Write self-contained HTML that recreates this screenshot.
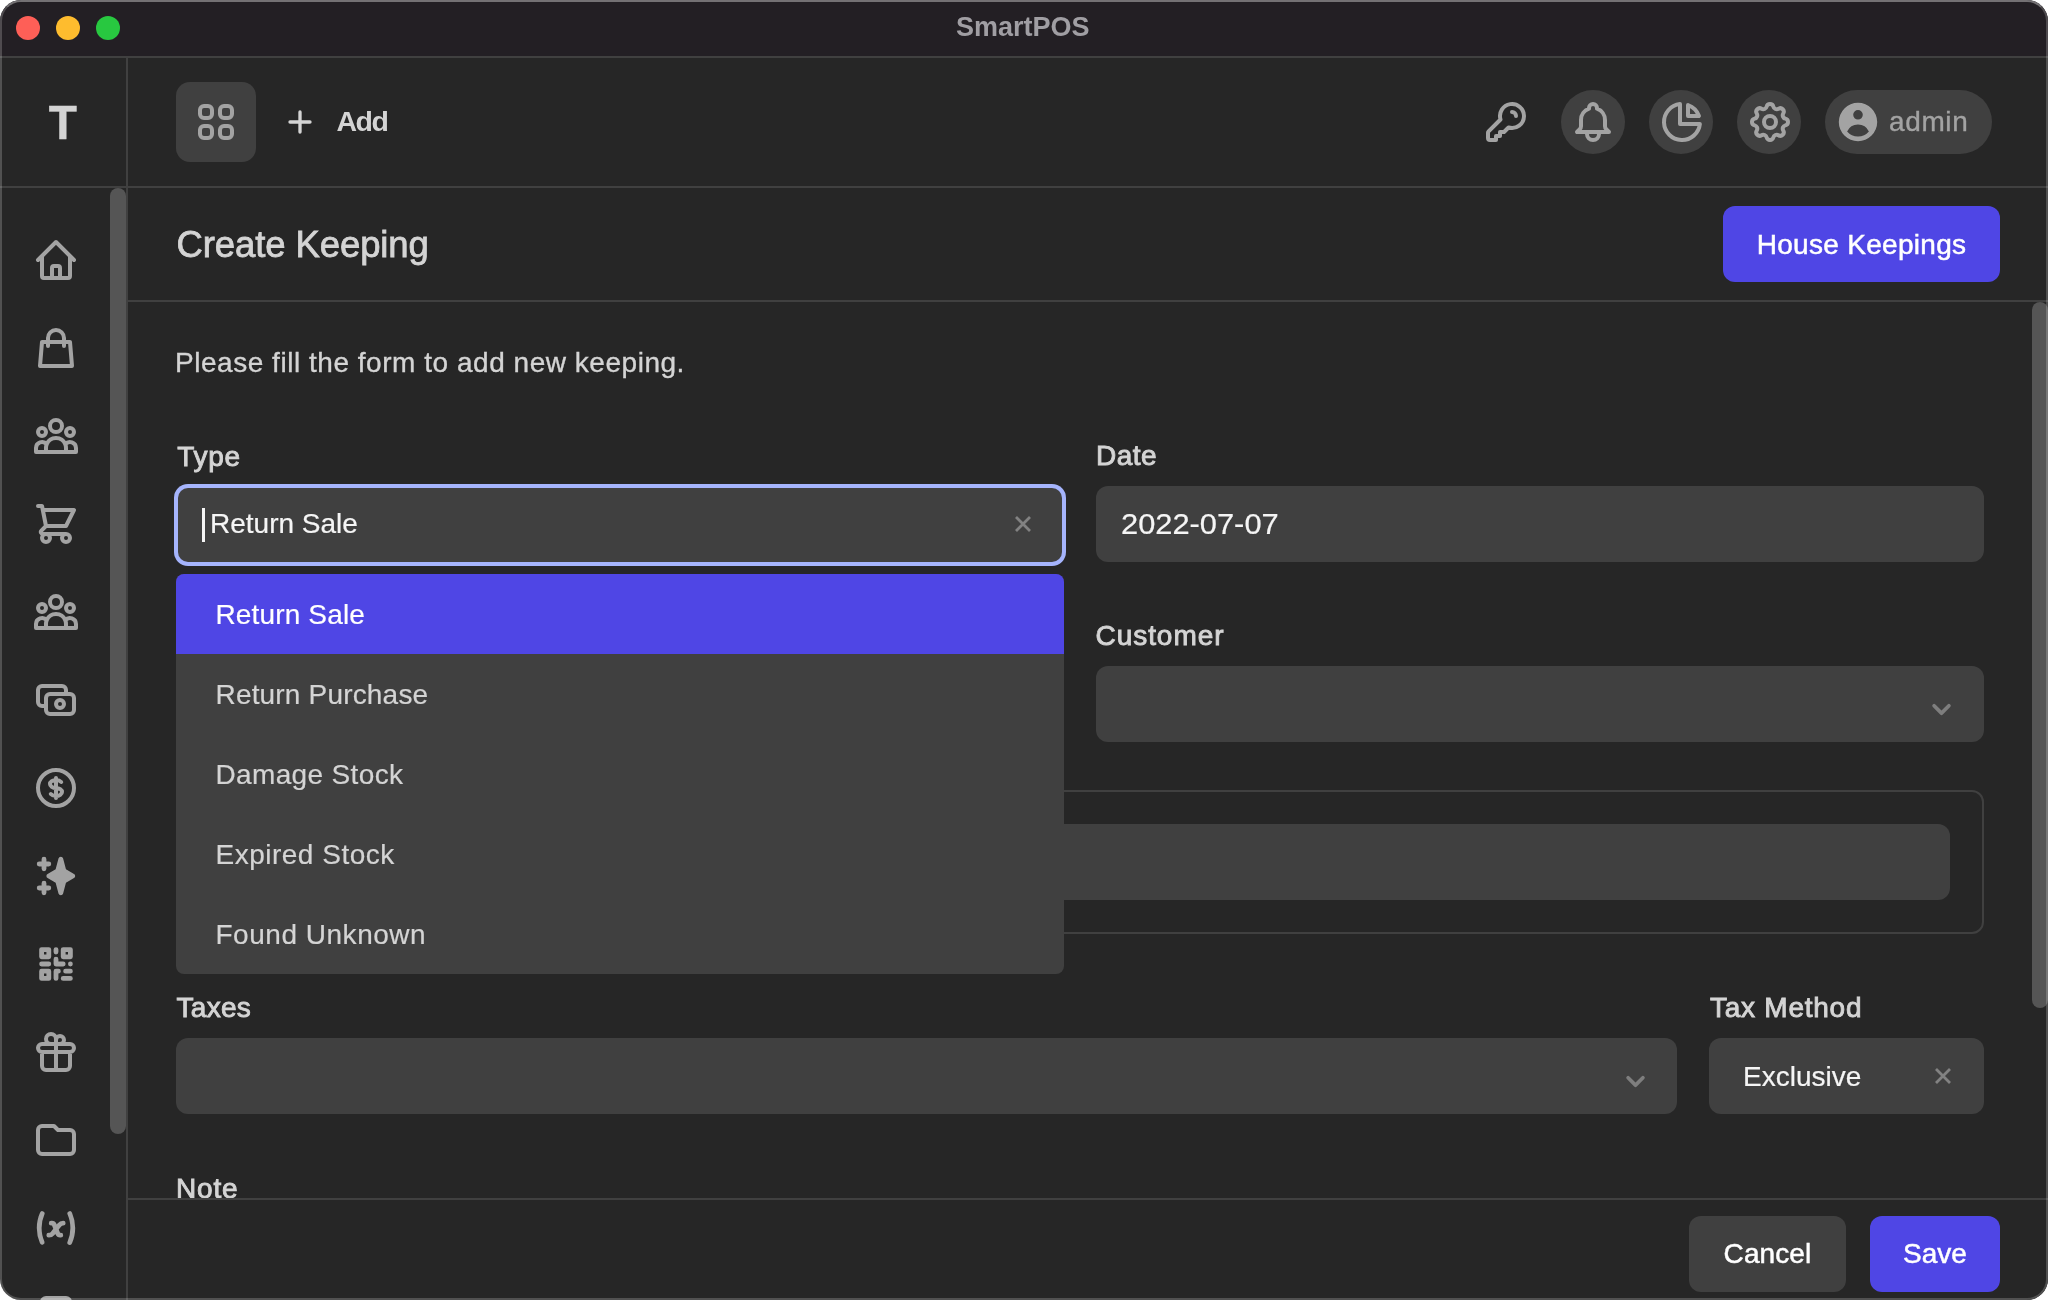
<!DOCTYPE html>
<html lang="en">
<head>
<meta charset="utf-8">
<title>SmartPOS</title>
<style>
*{box-sizing:border-box;margin:0;padding:0}
html,body{width:2048px;height:1300px;overflow:hidden;background:#fff;font-family:"Liberation Sans",sans-serif;color:#d4d4d4}
.abs{position:absolute}
.m{-webkit-text-stroke:0.6px currentColor}
#win{position:absolute;left:0;top:0;width:2048px;height:1300px;border-radius:21px;overflow:hidden;background:#262626;will-change:transform}
#frame{position:absolute;left:0;top:0;width:2048px;height:1300px;border-radius:21px;border:2px solid rgba(255,255,255,.2);border-top-color:rgba(255,255,255,.37);z-index:50;pointer-events:none}
#titlebar{left:0;top:0;width:2048px;height:56px;background:#231f24}
.tl{position:absolute;top:16px;width:24px;height:24px;border-radius:50%}
#title{left:956px;top:0;height:56px;line-height:55px;white-space:nowrap;font-weight:bold;font-size:27px;color:#a09ea3;letter-spacing:0}
.hl{position:absolute;background:#404040}
svg.i{position:absolute;width:48px;height:48px;fill:none;stroke:#a3a3a3;stroke-width:2;stroke-linecap:round;stroke-linejoin:round}
svg.s{position:absolute;width:48px;height:48px;fill:#a3a3a3;stroke:none}
.circ{position:absolute;width:64px;height:64px;border-radius:32px;background:#404040;top:90px}
.field{position:absolute;background:#404040;border-radius:12px;height:76px}
.lbl{position:absolute;font-size:28px;line-height:36px;color:#d4d4d4;white-space:nowrap;-webkit-text-stroke:0.9px #d4d4d4}
.txt{position:absolute;font-size:28px;line-height:36px;white-space:nowrap}
.opt{position:absolute;left:0;width:888px;height:80px;line-height:81px;padding-left:39.5px;font-size:28px;color:#d4d4d4;white-space:nowrap;-webkit-text-stroke:0.2px currentColor}
.btn{position:absolute;height:76px;line-height:76px;border-radius:12px;text-align:center;font-size:28px;white-space:nowrap}
</style>
</head>
<body>
<div id="win">
  <!-- title bar -->
  <div id="titlebar" class="abs"></div>
  <div class="tl" style="left:16px;background:#fe5f57"></div>
  <div class="tl" style="left:56px;background:#febc2e"></div>
  <div class="tl" style="left:96px;background:#28c840"></div>
  <div id="title" class="abs">SmartPOS</div>
  <div class="hl" style="left:0;top:56px;width:2048px;height:2px"></div>

  <!-- sidebar -->
  <div class="hl" style="left:126px;top:58px;width:2px;height:1242px"></div>
  <div class="hl" style="left:0;top:186px;width:2048px;height:2px"></div>
  <div class="abs" style="left:0;top:94.3px;width:125.5px;text-align:center;font-size:48.5px;line-height:56px;font-weight:bold;color:#d4d4d4;-webkit-text-stroke:.45px #d4d4d4;transform:scaleX(.95)">T</div>
  <div class="abs" style="left:110px;top:188px;width:16px;height:946px;border-radius:8px;background:#555"></div>

  <svg class="i" style="left:32px;top:236px" viewBox="0 0 24 24"><path d="M3 12l2-2m0 0l7-7 7 7M5 10v10a1 1 0 001 1h3m10-11l2 2m-2-2v10a1 1 0 01-1 1h-3m-6 0a1 1 0 001-1v-4a1 1 0 011-1h2a1 1 0 011 1v4a1 1 0 001 1m-6 0h6"/></svg>
  <svg class="i" style="left:32px;top:324px" viewBox="0 0 24 24"><path d="M16 11V7a4 4 0 00-8 0v4M5 9h14l1 12H4L5 9z"/></svg>
  <svg class="i" style="left:32px;top:412px" viewBox="0 0 24 24"><path d="M17 20h5v-2a3 3 0 00-5.356-1.857M17 20H7m10 0v-2c0-.656-.126-1.283-.356-1.857M7 20H2v-2a3 3 0 015.356-1.857M7 20v-2c0-.656.126-1.283.356-1.857m0 0a5.002 5.002 0 019.288 0M15 7a3 3 0 11-6 0 3 3 0 016 0zm6 3a2 2 0 11-4 0 2 2 0 014 0zM7 10a2 2 0 11-4 0 2 2 0 014 0z"/></svg>
  <svg class="i" style="left:32px;top:500px" viewBox="0 0 24 24"><path d="M3 3h2l.4 2M7 13h10l4-8H5.4M7 13L5.4 5M7 13l-2.293 2.293c-.63.63-.184 1.707.707 1.707H17m0 0a2 2 0 100 4 2 2 0 000-4zm-8 2a2 2 0 11-4 0 2 2 0 014 0z"/></svg>
  <svg class="i" style="left:32px;top:588px" viewBox="0 0 24 24"><path d="M17 20h5v-2a3 3 0 00-5.356-1.857M17 20H7m10 0v-2c0-.656-.126-1.283-.356-1.857M7 20H2v-2a3 3 0 015.356-1.857M7 20v-2c0-.656.126-1.283.356-1.857m0 0a5.002 5.002 0 019.288 0M15 7a3 3 0 11-6 0 3 3 0 016 0zm6 3a2 2 0 11-4 0 2 2 0 014 0zM7 10a2 2 0 11-4 0 2 2 0 014 0z"/></svg>
  <svg class="i" style="left:32px;top:676px" viewBox="0 0 24 24"><path d="M17 9V7a2 2 0 00-2-2H5a2 2 0 00-2 2v6a2 2 0 002 2h2m2 4h10a2 2 0 002-2v-6a2 2 0 00-2-2H9a2 2 0 00-2 2v6a2 2 0 002 2zm7-5a2 2 0 11-4 0 2 2 0 014 0z"/></svg>
  <svg class="i" style="left:32px;top:764px" viewBox="0 0 24 24"><path d="M12 8c-1.657 0-3 .895-3 2s1.343 2 3 2 3 .895 3 2-1.343 2-3 2m0-8c1.11 0 2.08.402 2.599 1M12 8V7m0 1v8m0 0v1m0-1c-1.11 0-2.08-.402-2.599-1M21 12a9 9 0 11-18 0 9 9 0 0118 0z"/></svg>
  <svg class="s" style="left:32px;top:852px" viewBox="0 0 20 20"><path fill-rule="evenodd" clip-rule="evenodd" d="M5 2a1 1 0 011 1v1h1a1 1 0 010 2H6v1a1 1 0 01-2 0V6H3a1 1 0 010-2h1V3a1 1 0 011-1zm0 10a1 1 0 011 1v1h1a1 1 0 110 2H6v1a1 1 0 11-2 0v-1H3a1 1 0 110-2h1v-1a1 1 0 011-1zM12 2a1 1 0 01.967.744L14.146 7.2 17.5 9.134a1 1 0 010 1.732l-3.354 1.935-1.18 4.455a1 1 0 01-1.933 0L9.854 12.8 6.5 10.866a1 1 0 010-1.732l3.354-1.935 1.18-4.455A1 1 0 0112 2z"/></svg>
  <svg class="s" style="left:32px;top:940px" viewBox="0 0 20 20"><path fill-rule="evenodd" clip-rule="evenodd" d="M3 4a1 1 0 011-1h3a1 1 0 011 1v3a1 1 0 01-1 1H4a1 1 0 01-1-1V4zm2 2V5h1v1H5zM3 13a1 1 0 011-1h3a1 1 0 011 1v3a1 1 0 01-1 1H4a1 1 0 01-1-1v-3zm2 2v-1h1v1H5zM13 3a1 1 0 00-1 1v3a1 1 0 001 1h3a1 1 0 001-1V4a1 1 0 00-1-1h-3zm1 2v1h1V5h-1z"/><path d="M11 4a1 1 0 10-2 0v1a1 1 0 002 0V4zM10 7a1 1 0 011 1v1h2a1 1 0 110 2h-3a1 1 0 01-1-1V8a1 1 0 011-1zM16 9a1 1 0 100 2 1 1 0 000-2zM9 13a1 1 0 011-1h1a1 1 0 110 2v2a1 1 0 11-2 0v-3zM7 11a1 1 0 100-2H4a1 1 0 100 2h3zM17 13a1 1 0 01-1 1h-2a1 1 0 110-2h2a1 1 0 011 1zM16 17a1 1 0 100-2h-3a1 1 0 100 2h3z"/></svg>
  <svg class="i" style="left:32px;top:1028px" viewBox="0 0 24 24"><path d="M12 8v13m0-13V6a2 2 0 112 2h-2zm0 0V5.500A2.500 2.500 0 109.500 8H12zm-7 4h14M5 12a2 2 0 110-4h14a2 2 0 110 4M5 12v7a2 2 0 002 2h10a2 2 0 002-2v-7"/></svg>
  <svg class="i" style="left:32px;top:1116px" viewBox="0 0 24 24"><path d="M3 7v10a2 2 0 002 2h14a2 2 0 002-2V9a2 2 0 00-2-2h-6l-2-2H5a2 2 0 00-2 2z"/></svg>
  <svg class="s" style="left:32px;top:1204px" viewBox="0 0 20 20"><path fill-rule="evenodd" clip-rule="evenodd" d="M4.649 3.084A1 1 0 015.163 4.400 13.950 13.950 0 004 10c0 1.993.416 3.886 1.164 5.600a1 1 0 01-1.832.800A15.950 15.950 0 012 10c0-2.274.475-4.440 1.332-6.400a1 1 0 011.317-.516zM12.960 7a3 3 0 00-2.342 1.126l-.328.410-.111-.279A2 2 0 008.323 7H8a1 1 0 000 2h.323l.532 1.330-1.035 1.295a1 1 0 01-.781.375H7a1 1 0 100 2h.039a3 3 0 002.342-1.126l.328-.410.111.279A2 2 0 0011.677 14H12a1 1 0 100-2h-.323l-.532-1.330 1.035-1.295A1 1 0 0112.961 9H13a1 1 0 100-2h-.039zm1.874-2.600a1 1 0 011.833-.800A15.950 15.950 0 0118 10c0 2.274-.475 4.440-1.332 6.400a1 1 0 11-1.832-.800A13.949 13.949 0 0016 10c0-1.993-.416-3.886-1.165-5.600z"/></svg>
  <svg class="i" style="left:32px;top:1292px" viewBox="0 0 24 24"><path d="M9 7h6m0 10v-3m-3 3h.01M9 17h.01M9 14h.01M12 14h.01M15 11h.01M12 11h.01M9 11h.01M7 21h10a2 2 0 002-2V5a2 2 0 00-2-2H7a2 2 0 00-2 2v14a2 2 0 002 2z"/></svg>

  <!-- header -->
  <div class="abs" style="left:176px;top:82px;width:80px;height:80px;border-radius:14px;background:#404040"></div>
  <div class="circ" style="left:1561px"></div>
  <div class="circ" style="left:1649px"></div>
  <div class="circ" style="left:1737px"></div>
  <div class="circ" style="left:1825px;width:167px"></div>
  <svg class="i" style="left:192px;top:98px" viewBox="0 0 24 24"><path d="M4 6a2 2 0 012-2h2a2 2 0 012 2v2a2 2 0 01-2 2H6a2 2 0 01-2-2V6zM14 6a2 2 0 012-2h2a2 2 0 012 2v2a2 2 0 01-2 2h-2a2 2 0 01-2-2V6zM4 16a2 2 0 012-2h2a2 2 0 012 2v2a2 2 0 01-2 2H6a2 2 0 01-2-2v-2zM14 16a2 2 0 012-2h2a2 2 0 012 2v2a2 2 0 01-2 2h-2a2 2 0 01-2-2v-2z"/></svg>
  <svg class="i" style="left:280px;top:102px;width:40px;height:40px;stroke:#d4d4d4" viewBox="0 0 24 24"><path d="M12 6v6m0 0v6m0-6h6m-6 0H6"/></svg>
  <svg class="i" style="left:1482px;top:98px" viewBox="0 0 24 24"><path d="M15 7a2 2 0 012 2m4 0a6 6 0 01-7.743 5.743L11 17H9v2H7v2H4a1 1 0 01-1-1v-2.586a1 1 0 01.293-.707l5.964-5.964A6 6 0 1121 9z"/></svg>
  <svg class="i" style="left:1569px;top:98px" viewBox="0 0 24 24"><path d="M15 17h5l-1.405-1.405A2.032 2.032 0 0118 14.158V11a6.002 6.002 0 00-4-5.659V5a2 2 0 10-4 0v.341C7.670 6.165 6 8.388 6 11v3.159c0 .538-.214 1.055-.595 1.436L4 17h5m6 0v1a3 3 0 11-6 0v-1m6 0H9"/></svg>
  <svg class="i" style="left:1658px;top:98px" viewBox="0 0 24 24"><path d="M11 3.055A9.001 9.001 0 1020.945 13H11V3.055z"/><path d="M20.488 9H15V3.512A9.025 9.025 0 0120.488 9z"/></svg>
  <svg class="i" style="left:1746px;top:98px" viewBox="0 0 24 24"><path d="M10.325 4.317c.426-1.756 2.924-1.756 3.350 0a1.724 1.724 0 002.573 1.066c1.543-.940 3.310.826 2.370 2.370a1.724 1.724 0 001.065 2.572c1.756.426 1.756 2.924 0 3.350a1.724 1.724 0 00-1.066 2.573c.940 1.543-.826 3.310-2.370 2.370a1.724 1.724 0 00-2.572 1.065c-.426 1.756-2.924 1.756-3.350 0a1.724 1.724 0 00-2.573-1.066c-1.543.940-3.310-.826-2.370-2.370a1.724 1.724 0 00-1.065-2.572c-1.756-.426-1.756-2.924 0-3.350a1.724 1.724 0 001.066-2.573c-.940-1.543.826-3.310 2.370-2.370.996.608 2.296.070 2.572-1.065z"/><path d="M15 12a3 3 0 11-6 0 3 3 0 016 0z"/></svg>
  <svg class="s" style="left:1834px;top:98px" viewBox="0 0 20 20"><path fill-rule="evenodd" clip-rule="evenodd" d="M18 10a8 8 0 11-16 0 8 8 0 0116 0zm-6-3a2 2 0 11-4 0 2 2 0 014 0zm-2 4a5 5 0 00-4.546 2.916A5.986 5.986 0 0010 16a5.986 5.986 0 004.546-2.084A5 5 0 0010 11z"/></svg>
  <div class="txt" style="left:336.5px;top:103px;color:#d4d4d4;font-weight:bold;letter-spacing:-1.5px;font-size:28.5px">Add</div>
  <div class="txt" style="left:1889px;top:104px;color:#a3a3a3;-webkit-text-stroke:0.35px #a3a3a3;letter-spacing:.62px">admin</div>

  <!-- page header -->
  <div class="abs" style="left:176.5px;top:220px;font-size:36.5px;line-height:50px;color:#d4d4d4;white-space:nowrap;-webkit-text-stroke:0.8px #d4d4d4;letter-spacing:-.1px">Create Keeping</div>
  <div class="btn" style="left:1723px;top:206px;width:277px;line-height:78px;background:#4f46e5;color:#fff;-webkit-text-stroke:0.5px #fff;letter-spacing:.3px">House Keepings</div>
  <div class="hl" style="left:128px;top:300px;width:1920px;height:2px"></div>

  <!-- content -->
  <div class="txt" style="left:175px;top:345px;color:#d4d4d4;letter-spacing:.53px;-webkit-text-stroke:0.35px #d4d4d4">Please fill the form to add new keeping.</div>
  <div class="lbl" style="left:177.2px;top:438.5px;letter-spacing:.7px">Type</div>
  <div class="lbl" style="left:1096px;top:438px;letter-spacing:.5px">Date</div>
  <div class="field" style="left:1096px;top:486px;width:888px"></div>
  <div class="txt" style="left:1121px;top:506px;font-size:28.6px;color:#f5f5f5;transform:scaleX(1.078);transform-origin:0 0;-webkit-text-stroke:0.2px #f5f5f5">2022-07-07</div>
  <div class="lbl" style="left:1095.5px;top:618px;letter-spacing:.95px">Customer</div>
  <div class="field" style="left:1096px;top:666px;width:888px"></div>

  <div class="abs" style="left:176px;top:790px;width:1808px;height:144px;border:2px solid #404040;border-radius:12px"></div>
  <div class="field" style="left:210px;top:824px;width:1740px"></div>

  <div class="lbl" style="left:176.5px;top:990px;letter-spacing:.3px">Taxes</div>
  <div class="field" style="left:176px;top:1038px;width:1501px"></div>
  <div class="lbl" style="left:1710px;top:990px;letter-spacing:.75px">Tax Method</div>
  <div class="field" style="left:1709px;top:1038px;width:275px"></div>
  <div class="txt" style="left:1743px;top:1058.5px;color:#f5f5f5;-webkit-text-stroke:0.2px #f5f5f5">Exclusive</div>
  <div class="lbl" style="left:176px;top:1170.5px;letter-spacing:.8px">Note</div>

  <!-- type input (focused) + dropdown -->
  <div class="abs" style="left:174px;top:484px;width:892px;height:82px;border-radius:14px;background:#a5b4fc"></div>
  <div class="field" style="left:178px;top:488px;width:884px;height:74px;border-radius:10px"></div>
  <div class="abs" style="left:202px;top:508px;width:2.5px;height:34px;background:#f5f5f5"></div>
  <div class="txt" style="left:210px;top:506px;color:#f5f5f5;-webkit-text-stroke:0.2px #f5f5f5">Return Sale</div>
  <div class="abs" style="left:176px;top:574px;width:888px;height:400px;border-radius:8px;background:#404040;overflow:hidden">
    <div class="opt" style="top:0;background:#4f46e5;color:#fff;letter-spacing:.15px">Return Sale</div>
    <div class="opt" style="top:80px;letter-spacing:.18px">Return Purchase</div>
    <div class="opt" style="top:160px;letter-spacing:.35px">Damage Stock</div>
    <div class="opt" style="top:240px;letter-spacing:.5px">Expired Stock</div>
    <div class="opt" style="top:320px;letter-spacing:.52px">Found Unknown</div>
  </div>

  <!-- scrollbar right -->
  <div class="abs" style="left:2032px;top:302px;width:16px;height:706px;border-radius:8px;background:#555"></div>

  <!-- footer -->
  <div class="abs" style="left:128px;top:1198px;width:1920px;height:102px;background:#262626"></div>
  <div class="hl" style="left:128px;top:1198px;width:1920px;height:2px"></div>
  <div class="btn" style="left:1689px;top:1216px;width:157px;background:#404040;color:#fff;-webkit-text-stroke:0.5px #fff;letter-spacing:.1px">Cancel</div>
  <div class="btn" style="left:1870px;top:1216px;width:130px;background:#4f46e5;color:#fff;-webkit-text-stroke:0.5px #fff">Save</div>
  <svg class="abs" style="left:1014.5px;top:516px;width:16px;height:16px" viewBox="0 0 16 16"><path d="M1 1L15 15M15 1L1 15" fill="none" stroke="#828282" stroke-width="2.8"/></svg>
  <svg class="abs" style="left:1934.7px;top:1067.9px;width:16px;height:16px" viewBox="0 0 16 16"><path d="M1 1L15 15M15 1L1 15" fill="none" stroke="#828282" stroke-width="2.8"/></svg>
  <svg class="abs" style="left:1923px;top:690.7px;width:37px;height:37px" viewBox="0 0 20 20"><path fill="#7e7e7e" d="M5.293 7.293a1 1 0 011.414 0L10 10.586l3.293-3.293a1 1 0 111.414 1.414l-4 4a1 1 0 01-1.414 0l-4-4a1 1 0 010-1.414z"/></svg>
  <svg class="abs" style="left:1616.6px;top:1062.7px;width:37px;height:37px" viewBox="0 0 20 20"><path fill="#7e7e7e" d="M5.293 7.293a1 1 0 011.414 0L10 10.586l3.293-3.293a1 1 0 111.414 1.414l-4 4a1 1 0 01-1.414 0l-4-4a1 1 0 010-1.414z"/></svg>
</div>
<div id="frame"></div>
</body>
</html>
